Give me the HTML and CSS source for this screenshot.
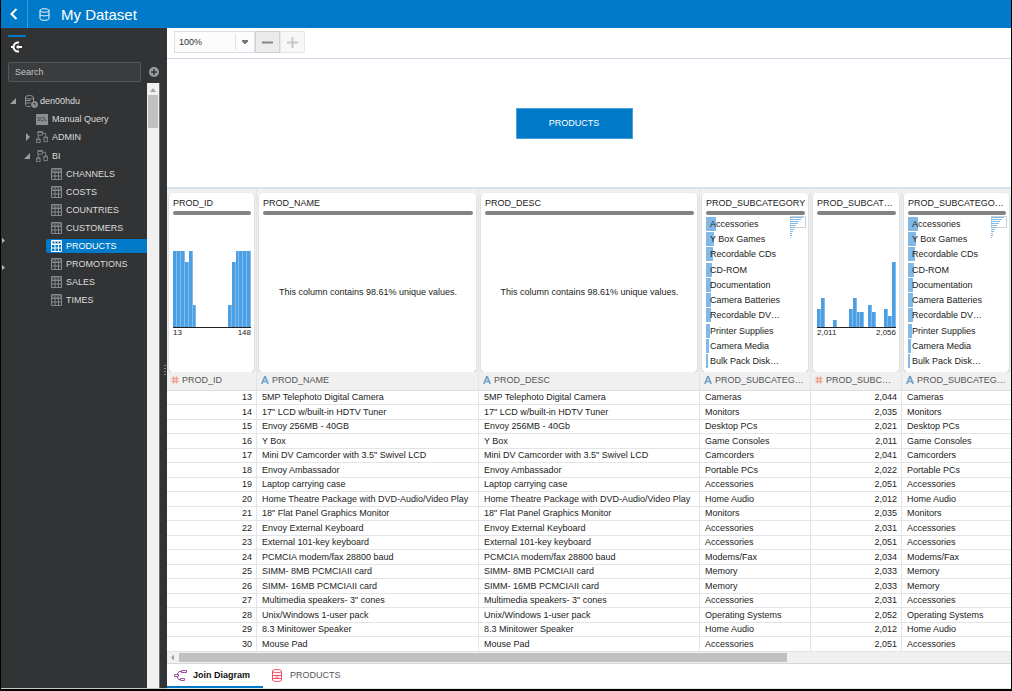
FILE: index.html
```html
<!DOCTYPE html>
<html lang="en">
<head>
    <meta charset="UTF-8">
    <meta name="viewport" content="width=device-width, initial-scale=1.0">
    <title>My Dataset</title>
    <link rel="stylesheet" href="styles.css">
</head>
<body>
    <!-- shared icons -->
    <svg class="sprite" aria-hidden="true">
        <symbol id="i-table" viewBox="0 0 11 12">
            <path d="M.5.5h10v11H.5zM.5 4.500h10M.5 8h10M4 4v7.500M7.500 4v7.500" fill="none" stroke="currentColor"/>
            <path d="M1 1h9v3H1z" fill="currentColor" opacity=".6"/>
            <path d="M2 2.500h1M5 2.500h1M8 2.500h1" stroke="#323334"/>
        </symbol>
        <symbol id="i-schema" viewBox="0 0 13 13">
            <path d="M2 .5h5v4H2zM.5 8.500h4v4h-4zM8.500 6.500h4v5h-4zM2.500 4.500v4M7 2.500h3.500v4M2 1.500h5M.5 9.500h4M8.500 7.500h4" fill="none" stroke="currentColor"/>
        </symbol>
        <symbol id="i-letter" viewBox="0 0 8 8">
            <path d="M.8 8 4 0l3.200 8M2 5.500h4" fill="none" stroke="#6fa3cb" stroke-width="1.700"/>
        </symbol>
        <symbol id="i-hash" viewBox="0 0 8 8">
            <path d="M2.500.5v7M5.500.5v7M.5 2.500h7M.5 5.500h7" fill="none" stroke="#f3a08e" stroke-width="1.300"/>
        </symbol>
    </svg>

    <header class="topbar">
        <button class="back" type="button" aria-label="Back">
            <svg width="8" height="12" viewBox="0 0 8 12"><path d="M6.500 1 1.500 6l5 5" fill="none" stroke="#fff" stroke-width="2"/></svg>
        </button>
        <svg width="11" height="13" viewBox="0 0 11 13" fill="none" stroke="#fff"><path d="M1 2.500v8c0 2.400 9 2.400 9 0v-8M1 2.500C1 .2 10 .2 10 2.500S1 4.800 1 2.500M1 6.500c0 1.800 9 1.800 9 0"/></svg>
        <h1>My Dataset</h1>
    </header>

    <div class="workspace">
        <aside class="sidebar">
            <div class="side-tabs">
                <button class="side-tab" type="button" aria-label="Connections">
                    <svg width="14" height="12" viewBox="0 0 14 12"><path d="M9 1.500a4.600 4.600 0 1 0 0 9" fill="none" stroke="#fff" stroke-width="2"/><path d="M1 6h2M8 6h4" stroke="#fff" stroke-width="2"/><path d="M8.500 3.500v5L6 6z" fill="#fff"/></svg>
                </button>
            </div>
            <div class="search">
                <input type="text" placeholder="Search" aria-label="Search">
                <button class="add" type="button" aria-label="Add">
                    <svg width="10" height="10" viewBox="0 0 10 10"><circle cx="5" cy="5" r="5" fill="#9b9d9f"/><path d="M5 2v6M2 5h6" stroke="#323334" stroke-width="1.500"/></svg>
                </button>
            </div>
            <div class="side-body">
                <ul class="tree">
                    <li class="row level-1"><span class="arrow open"></span>
                        <svg width="13" height="13" viewBox="0 0 13 13" fill="none" stroke="#8d9092"><ellipse cx="4.500" cy="2.300" rx="4" ry="1.800"/><path d="M.5 2.300v7.500c0 1.500 3 2 5 1.700M8.500 2.300v4M.5 5.500h5M.5 8h5"/><circle cx="9.500" cy="9.500" r="3" fill="#8d9092"/><path d="M8.500 8.500h1.500v2" stroke="#323334"/></svg>
                        den00hdu</li>
                    <li class="row level-2"><span class="arrow"></span><span class="sql">SQL</span>Manual Query</li>
                    <li class="row level-2"><span class="arrow closed"></span><svg width="12" height="12"><use href="#i-schema"/></svg>ADMIN</li>
                    <li class="row level-2 group"><span class="arrow open"></span><svg width="12" height="12"><use href="#i-schema"/></svg>BI</li>
                    <li class="row level-3"><svg width="11" height="12"><use href="#i-table"/></svg>CHANNELS</li>
                    <li class="row level-3"><svg width="11" height="12"><use href="#i-table"/></svg>COSTS</li>
                    <li class="row level-3"><svg width="11" height="12"><use href="#i-table"/></svg>COUNTRIES</li>
                    <li class="row level-3"><svg width="11" height="12"><use href="#i-table"/></svg>CUSTOMERS</li>
                    <li class="row level-3 selected"><svg width="11" height="12"><use href="#i-table"/></svg>PRODUCTS</li>
                    <li class="row level-3"><svg width="11" height="12"><use href="#i-table"/></svg>PROMOTIONS</li>
                    <li class="row level-3"><svg width="11" height="12"><use href="#i-table"/></svg>SALES</li>
                    <li class="row level-3"><svg width="11" height="12"><use href="#i-table"/></svg>TIMES</li>
                </ul>
                <div class="vscroll"><span class="vscroll-up"></span><span class="vscroll-thumb"></span></div>
                <div class="splitter"><span></span></div>
            </div>
            <div class="edge"><span></span><span></span></div>
        </aside>

        <main class="content">
            <div class="toolbar">
                <select class="zoom-level" aria-label="Zoom level"><option>100%</option></select>
                <button class="zoom-out" type="button" aria-label="Zoom out"><svg width="11" height="11" viewBox="0 0 11 11"><path d="M0 5.500h11" stroke="#848484" stroke-width="2"/></svg></button>
                <button class="zoom-in" type="button" aria-label="Zoom in"><svg width="11" height="11" viewBox="0 0 11 11"><path d="M0 5.500h11M5.500 0v11" stroke="#c8c8c8" stroke-width="2"/></svg></button>
            </div>
            <div class="diagram">
                <button class="node" type="button">PRODUCTS</button>
            </div>
            <div class="preview">
                <table>
                    <colgroup>
                        <col class="c-id"><col class="c-name"><col class="c-desc"><col class="c-sub"><col class="c-subid"><col>
                    </colgroup>
                    <thead>
                        <tr class="cards">
                            <td><div class="card"><h2>PROD_ID</h2><div class="quality"></div><div class="histogram" data-bars="76 76 76 65 76 22 0 0 0 0 0 0 0 0 22 65 76 76 76 76"></div><div class="range"><span>13</span><span>148</span></div></div></td>
                            <td><div class="card"><h2>PROD_NAME</h2><div class="quality"></div><p>This column contains 98.61% unique values.</p></div></td>
                            <td><div class="card"><h2>PROD_DESC</h2><div class="quality"></div><p>This column contains 98.61% unique values.</p></div></td>
                            <td><div class="card"><h2>PROD_SUBCATEGORY</h2><div class="quality"></div><ul class="values"></ul></div></td>
                            <td><div class="card"><h2>PROD_SUBCAT…</h2><div class="quality"></div><div class="histogram" data-bars="18 29 0 0 7 0 0 0 18 29 15 15 0 22 15 0 0 18 11 65"></div><div class="range"><span>2,011</span><span>2,056</span></div></div></td>
                            <td><div class="card"><h2>PROD_SUBCATEGO…</h2><div class="quality"></div><ul class="values"></ul></div></td>
                        </tr>
                        <tr class="names">
                            <th><svg width="8" height="8"><use href="#i-hash"/></svg>PROD_ID</th>
                            <th><svg width="8" height="8"><use href="#i-letter"/></svg>PROD_NAME</th>
                            <th><svg width="8" height="8"><use href="#i-letter"/></svg>PROD_DESC</th>
                            <th><svg width="8" height="8"><use href="#i-letter"/></svg>PROD_SUBCATEG…</th>
                            <th><svg width="8" height="8"><use href="#i-hash"/></svg>PROD_SUBC…</th>
                            <th><svg width="8" height="8"><use href="#i-letter"/></svg>PROD_SUBCATEG…</th>
                        </tr>
                    </thead>
                    <tbody id="rows"></tbody>
                </table>
            </div>
            <div class="hscroll"><span class="hscroll-left"></span><span class="hscroll-thumb"></span></div>
            <nav class="tabs">
                <button class="tab active" type="button">
                    <svg width="13" height="13" viewBox="0 0 13 13" fill="none" stroke="#9a4fa0"><path d="M.5 5.500h4v2h-4zM7.500 1.500h5v2h-5zM6.500 9.500h4v2h-4zM3 5.500l2-3h2.500M3 7.500l1.500 3h2"/></svg>
                    Join Diagram</button>
                <button class="tab" type="button">
                    <svg width="10" height="13" viewBox="0 0 10 13" fill="none" stroke="#fb4b64"><path d="M.5 2c0-2 9-2 9 0v9c0 2-9 2-9 0zM.5 2.500c0 1.500 9 1.500 9 0M1 6.500h8M1 9.500h8M3.500 8h3"/></svg>
                    PRODUCTS</button>
            </nav>
        </main>
    </div>
    <script src="script.js"></script>
</body>
</html>
```
FILE: styles.css
```css
* {
    box-sizing: border-box;
}

body {
    margin: 0;
    height: 100vh;
    display: flex;
    flex-direction: column;
    font-family: "Liberation Sans", Arial, sans-serif;
    font-size: 9px;
    color: #222;
    background: #fff;
    border: 1px solid #000;
    border-top: 0;
    border-bottom-width: 2px;
    overflow: hidden;
}

button,
input,
select {
    font: inherit;
    margin: 0;
    padding: 0;
    border: 0;
    background: none;
}

h1,
h2,
p,
ul {
    margin: 0;
    padding: 0;
    font-weight: normal;
    list-style: none;
}

svg {
    flex: none;
}

.sprite {
    position: absolute;
    width: 0;
    height: 0;
}

/* top bar */
.topbar {
    display: flex;
    align-items: center;
    height: 28px;
    flex: none;
    background: #007ac8;
    color: #fff;
}

.back {
    width: 27px;
    height: 28px;
    margin-right: 11px;
    display: flex;
    align-items: center;
    justify-content: center;
    border-right: 1px solid #3f9bd6;
}

.topbar h1 {
    margin-left: 11px;
    font-size: 15px;
}

.workspace {
    flex: 1;
    min-height: 0;
    display: flex;
}

/* sidebar */
.sidebar {
    position: relative;
    width: 166px;
    flex: none;
    display: flex;
    flex-direction: column;
    background: #323334;
    color: #dcdcdc;
    border-bottom: 1px solid #c4c4c4;
}

.side-tabs {
    height: 33px;
    padding: 7px 7px 0;
}

.side-tab {
    width: 18px;
    height: 18px;
    border-top: 2px solid #007ac8;
    display: flex;
    align-items: flex-end;
    justify-content: center;
}

.search {
    display: flex;
    align-items: center;
    gap: 8px;
    padding-left: 7px;
    height: 22px;
}

.search input {
    width: 133px;
    height: 20px;
    padding: 0 6px;
    color: #dcdcdc;
    background: #3b3c3d;
    border: 1px solid #555658;
    border-radius: 2px;
}

.search input::placeholder {
    color: #c4c5c6;
}

.add {
    display: flex;
}

.side-body {
    flex: 1;
    display: flex;
    min-height: 0;
}

.tree {
    flex: 1;
    padding-top: 9px;
}

.row {
    display: flex;
    align-items: center;
    gap: 4px;
    height: 18px;
    white-space: nowrap;
}

.row svg {
    color: #85888a;
}

.level-1 {
    padding-left: 9px;
    gap: 2px;
}

.level-1 svg {
    margin-left: 5px;
}

.level-2 {
    padding-left: 23px;
}

.group {
    height: 20px;
}

.level-3 {
    margin-left: 45px;
    padding-left: 5px;
    gap: 4px;
    height: 14px;
    margin-bottom: 4px;
    border-radius: 2px 0 0 2px;
}

.group + .level-3 {
    margin-top: 1px;
}

.selected {
    background: #007ac8;
    color: #fff;
}

.selected svg {
    color: #fff;
}

.arrow {
    width: 8px;
    flex: none;
}

.arrow.open::before,
.arrow.closed::before {
    content: "";
    display: block;
    width: 6px;
    height: 6px;
    background: #9b9d9f;
    clip-path: polygon(100% 0, 100% 100%, 0 100%);
}

.arrow.closed::before {
    width: 4px;
    height: 8px;
    margin-left: 2px;
    clip-path: polygon(0 0, 100% 50%, 0 100%);
}

.sql {
    width: 12px;
    height: 11px;
    line-height: 11px;
    font-size: 5px;
    text-align: center;
    color: #323334;
    background: #8d9092;
}

.vscroll {
    width: 12px;
    padding: 3px 1px;
    display: flex;
    flex-direction: column;
    align-items: center;
    background: #f0f0f0;
}

.vscroll-up {
    width: 6px;
    height: 4px;
    margin: 2px 0 3px;
    background: #a3a3a3;
    clip-path: polygon(50% 0, 100% 100%, 0 100%);
}

.vscroll-thumb {
    width: 10px;
    height: 33px;
    background: #c1c1c1;
}

.splitter {
    width: 8px;
    display: flex;
    align-items: center;
    justify-content: flex-end;
    padding-right: 1px;
    border-left: 1px solid #6b6c6d;
}

.splitter span {
    width: 2px;
    height: 10px;
    margin-bottom: 32px;
    background: repeating-linear-gradient(#85888a 0 1px, transparent 1px 3px);
}

/* window edge showing beside the sidebar */
.edge {
    position: absolute;
    left: -1px;
    top: 210px;
    height: 72px;
    border-left: 1px solid #fff;
}

.edge span {
    display: block;
    width: 3px;
    height: 5px;
    margin: 0 0 22px 1px;
    background: #b9babb;
    clip-path: polygon(0 0, 100% 50%, 0 100%);
}

/* content */
.content {
    flex: 1;
    min-width: 0;
    display: flex;
    flex-direction: column;
}

.toolbar {
    display: flex;
    height: 31px;
    flex: none;
    padding: 3px 7px 5px;
    border-bottom: 1px solid #ccd8e4;
}

.zoom-level {
    width: 81px;
    padding: 0 4px;
    appearance: none;
    border: 1px solid #d6dfe6;
    background:
        conic-gradient(from -37deg at 50% 100%, #777 74deg, transparent 0) right 5px center / 8px 5px no-repeat,
        linear-gradient(#dfe4e8, #dfe4e8) right 18px center / 1px 16px no-repeat,
        #fcfcfc;
    color: #333;
}

.zoom-out,
.zoom-in {
    width: 25px;
    display: flex;
    align-items: center;
    justify-content: center;
    border: 1px solid #e4e6e8;
    background: #f7f7f7;
}

.zoom-out {
    border-color: #cdd3d8;
    background: #ebebeb;
}

.diagram {
    flex: 1;
    min-height: 60px;
    display: flex;
    align-items: center;
    justify-content: center;
    padding-right: 30px;
}

.node {
    width: 117px;
    height: 31px;
    border: 1px solid #4aa0dc;
    background: #007ac8;
    color: #fff;
}

.preview {
    border-top: 2px solid #dae3ea;
    overflow: hidden;
}

table {
    width: 100%;
    table-layout: fixed;
    border-collapse: separate;
    border-spacing: 0;
}

.c-id { width: 90px; }
.c-name { width: 222px; }
.c-desc { width: 221px; }
.c-sub { width: 111px; }
.c-subid { width: 91px; }

td,
th {
    padding: 0 4px;
    text-align: left;
    font-weight: normal;
    white-space: nowrap;
    overflow: hidden;
    border-right: 1px solid #e2e5e8;
}

td:last-child,
th:last-child {
    border-right: 0;
}

.cards td {
    padding: 4px 2px 0;
    background: #f0f0f0;
}

.card {
    position: relative;
    height: 179px;
    padding: 4px 3px 4px 4px;
    display: flex;
    flex-direction: column;
    background: #fff;
    border-radius: 4px;
    box-shadow: 0 1px 2px #b8b8b8;
}

.card h2 {
    font-size: 9px;
    line-height: 12px;
}

.quality {
    height: 4px;
    flex: none;
    margin: 2px 0;
    border-radius: 2px;
    background: #828282;
}

.card p {
    margin: auto;
    padding-bottom: 2px;
}

.histogram {
    height: 111px;
    display: flex;
    align-items: flex-end;
    border-bottom: 1px solid #222;
}

.histogram i {
    flex: 1;
    background: #4a9fe5;
    border-right: 1px solid #82bcec;
}

.range {
    display: flex;
    justify-content: space-between;
    font-size: 8px;
    line-height: 9px;
}

.values {
    flex: 1;
    display: flex;
    flex-direction: column;
    justify-content: space-between;
}

.values li {
    display: flex;
    align-items: center;
    height: 14px;
}

.values li::before {
    content: "";
    width: var(--size);
    height: 14px;
    margin-right: calc(4px - var(--size));
    background: #83b9e6;
}

.values span {
    position: relative;
}

.overview {
    position: absolute;
    right: 2px;
    top: 23px;
}

.names th {
    height: 19px;
    padding-bottom: 2px;
    font-size: 9px;
    color: #555;
    background: #f0f0f0;
    border-bottom: 1px solid #dcdfe2;
}

.names svg {
    margin-right: 3px;
    vertical-align: -1px;
}

tbody td {
    height: 14px;
    line-height: 13px;
    padding-left: 5px;
    border-bottom: 1px solid #e2e5e8;
}

tbody tr:nth-child(even) td {
    height: 15px;
}

tbody .number {
    text-align: right;
}

.hscroll {
    display: flex;
    align-items: center;
    height: 12px;
    flex: none;
    background: #f0f0f0;
    border-bottom: 1px solid #d6d6d6;
}

.hscroll-left {
    width: 3px;
    height: 6px;
    margin: 0 5px 0 4px;
    background: #a3a3a3;
    clip-path: polygon(100% 0, 100% 100%, 0 50%);
}

.hscroll-thumb {
    width: 72%;
    height: 9px;
    background: #c1c1c1;
}

.tabs {
    display: flex;
    height: 25px;
    flex: none;
    border-bottom: 1px solid #e4e4e4;
}

.tab {
    display: flex;
    align-items: center;
    gap: 8px;
    padding: 0 9px;
    color: #555;
    border-bottom: 2px solid transparent;
}

.tab.active {
    width: 96px;
    padding: 0 7px;
    gap: 6px;
    color: #111;
    font-weight: bold;
    border-color: #007ac8;
}
```
FILE: script.js
```js
const values = [
    ["Accessories", 10], ["Y Box Games", 8], ["Recordable CDs", 7], ["CD-ROM", 6], ["Documentation", 5],
    ["Camera Batteries", 5], ["Recordable DV…", 5], ["Printer Supplies", 4], ["Camera Media", 3], ["Bulk Pack Disk…", 2]
];

const products = [
    [13, "5MP Telephoto Digital Camera", "", "Cameras", "2,044"],
    [14, "17\" LCD w/built-in HDTV Tuner", "", "Monitors", "2,035"],
    [15, "Envoy 256MB - 40GB", "Envoy 256MB - 40Gb", "Desktop PCs", "2,021"],
    [16, "Y Box", "", "Game Consoles", "2,011"],
    [17, "Mini DV Camcorder with 3.5\" Swivel LCD", "", "Camcorders", "2,041"],
    [18, "Envoy Ambassador", "", "Portable PCs", "2,022"],
    [19, "Laptop carrying case", "", "Accessories", "2,051"],
    [20, "Home Theatre Package with DVD-Audio/Video Play", "", "Home Audio", "2,012"],
    [21, "18\" Flat Panel Graphics Monitor", "", "Monitors", "2,035"],
    [22, "Envoy External Keyboard", "", "Accessories", "2,031"],
    [23, "External 101-key keyboard", "", "Accessories", "2,051"],
    [24, "PCMCIA modem/fax 28800 baud", "", "Modems/Fax", "2,034"],
    [25, "SIMM- 8MB PCMCIAII card", "", "Memory", "2,033"],
    [26, "SIMM- 16MB PCMCIAII card", "", "Memory", "2,033"],
    [27, "Multimedia speakers- 3\" cones", "", "Accessories", "2,031"],
    [28, "Unix/Windows 1-user pack", "", "Operating Systems", "2,052"],
    [29, "8.3 Minitower Speaker", "", "Home Audio", "2,012"],
    [30, "Mouse Pad", "", "Accessories", "2,051"]
];

document.getElementById("rows").innerHTML = products.map(([id, name, desc, sub, subId]) => `
    <tr><td class="number">${id}</td><td>${name}</td><td>${desc || name}</td><td>${sub}</td><td class="number">${subId}</td><td>${sub}</td></tr>`).join("");

document.querySelectorAll(".histogram").forEach(chart => {
    chart.innerHTML = chart.dataset.bars.split(" ").map(h => `<i style="height:${h}px"></i>`).join("");
});

document.querySelectorAll(".values").forEach(list => {
    list.innerHTML = values.map(([name, size]) => `<li style="--size:${size}px"><span>${name}</span></li>`).join("");
    // small overview of the whole distribution
    list.insertAdjacentHTML("afterend", `<svg class="overview" width="16" height="23" viewBox="0 0 16 23">
        <path d="M.5.5h15v11H.5z" fill="none" stroke="#d0d0d0"/>
        <path d="M0 1.500h13M0 3.500h11M0 5.500h9M0 7.500h8M0 9.500h6M0 11.500h5M0 13.500h4M0 15.500h3M0 17.500h2M0 19.500h2M0 21.500h1" stroke="#83b9e6"/></svg>`);
});
```
